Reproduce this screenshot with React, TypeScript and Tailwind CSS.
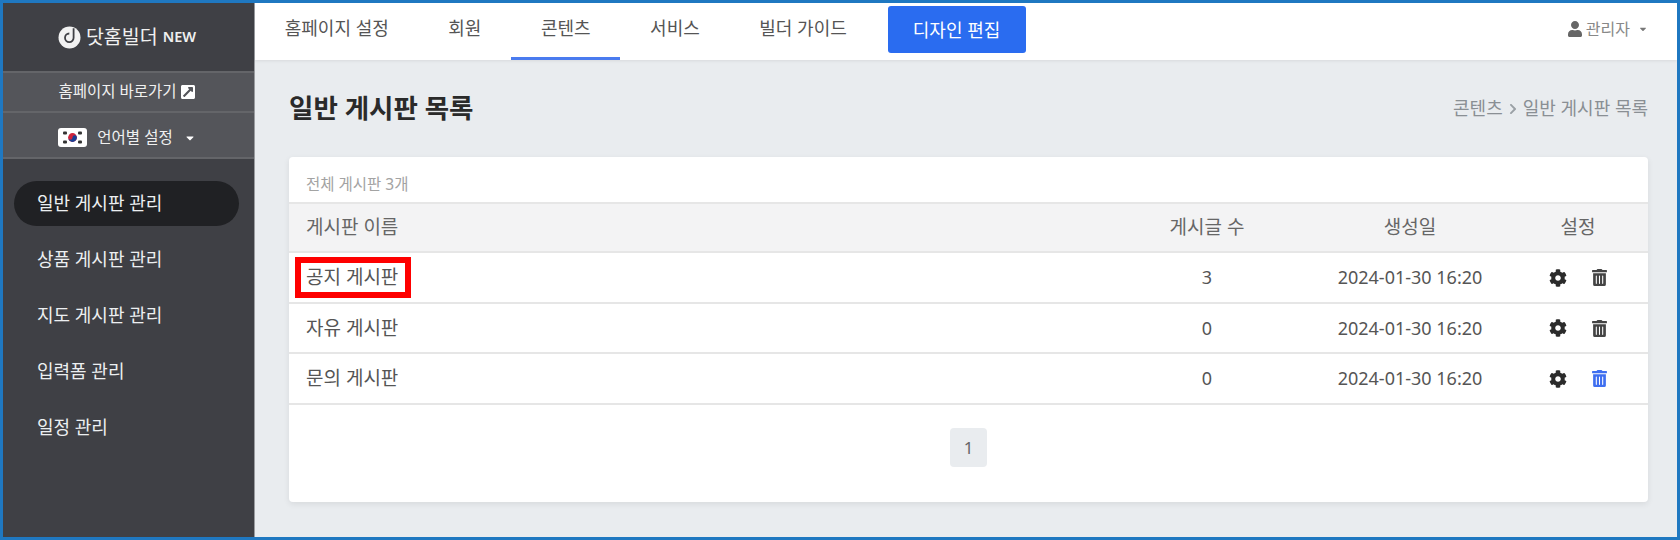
import { FaCog, FaTrashAlt, FaUser, FaExternalLinkSquareAlt, FaCaretDown, FaChevronRight } from 'react-icons/fa'

const tabs = ['홈페이지 설정', '회원', '콘텐츠', '서비스', '빌더 가이드']
const menus = ['일반 게시판 관리', '상품 게시판 관리', '지도 게시판 관리', '입력폼 관리', '일정 관리']
const rows = [
  { name: '공지 게시판', count: 3, h: 'h-[51px]', boxed: true },
  { name: '자유 게시판', count: 0, h: 'h-[50px]' },
  { name: '문의 게시판', count: 0, h: 'h-[51px]', hover: true },
]

function Flag() {
  return (
    <svg width="29" height="19" viewBox="0 0 29 19" className="shrink-0">
      <rect width="29" height="19" rx="3" fill="#fff" />
      <circle cx="14.5" cy="9.5" r="4.4" fill="#d0243c" />
      <path d="M10.1 9.5a4.4 4.4 0 0 0 8.8 0a2.2 2.2 0 0 0-4.4 0a2.2 2.2 0 0 1-4.4 0z" fill="#1a3f94" />
      <g fill="#333">
        <rect x="5" y="3.5" width="4" height="3" rx="1" />
        <rect x="20" y="3.5" width="4" height="3" rx="1" />
        <rect x="5" y="12.5" width="4" height="3" rx="1" />
        <rect x="20" y="12.5" width="4" height="3" rx="1" />
      </g>
    </svg>
  )
}

function Logo() {
  return (
    <svg width="23" height="23" viewBox="0 0 23 23" className="shrink-0">
      <circle cx="11.5" cy="11.5" r="11" fill="#f2f2f2" />
      <path d="M15.6 2.2v9.6a4.3 4.3 0 1 1-4.3-4.3" fill="none" stroke="#3f4045" strokeWidth="1.8" />
    </svg>
  )
}

export default function App() {
  return (
    <div className="h-[540px] w-[1680px] border-[3px] border-[#1f78c1] flex bg-[#e9ecef] overflow-hidden font-['Noto_Sans','Noto_Sans_CJK_KR',sans-serif]">
      {/* sidebar */}
      <aside className="w-[252px] shrink-0 bg-[#3f4045] border-r border-[#9a9ca0]">
        <div className="h-[68px] flex items-center justify-center text-[#f0f0f0] pr-[3px]">
          <Logo />
          <span className="text-[19.5px] ml-[5px]">닷홈빌더</span>
          <span className="text-[14.5px] font-semibold ml-[5px]">NEW</span>
        </div>
        <div className="h-[42px] bg-[#54555a] border-y-2 border-[#646569] flex items-center justify-center gap-[3px] text-[15.5px] text-[#f0f0f0] pr-[3px]">
          홈페이지 바로가기
          <FaExternalLinkSquareAlt className="text-[16px] text-white" />
        </div>
        <div className="h-[48px] -mt-[2px] pt-[5px] bg-[#54555a] border-y-2 border-[#646569] flex items-center justify-center text-[15.5px] text-[#f0f0f0] pr-[3px]">
          <Flag />
          <span className="ml-[10px]">언어별 설정</span>
          <FaCaretDown className="ml-[11px] text-[12px] text-white" />
        </div>
        <nav className="px-[11px] pt-[22px] flex flex-col gap-[11px]">
          {menus.map((m, i) => (
            <div
              key={m}
              className={`h-[45px] w-[225px] rounded-full pl-[23px] flex items-center text-[18px] text-[#eceff1] ${i === 0 ? 'bg-[#202124]' : ''}`}
            >
              {m}
            </div>
          ))}
        </nav>
      </aside>

      <div className="flex-1 min-w-0 flex flex-col">
        {/* top bar */}
        <header className="h-[57px] shrink-0 bg-white shadow-[0_1px_3px_rgba(0,0,0,0.08)] flex items-start">
          <nav className="flex items-start">
            {tabs.map((t, i) => (
              <div
                key={t}
                className={`h-[57px] px-[29.75px] pt-[12px] text-[18px] text-[#555] border-b-[3px] ${i === 2 ? 'border-[#4a7bef]' : 'border-transparent'}`}
              >
                {t}
              </div>
            ))}
          </nav>
          <button className="ml-[11px] mt-[3px] w-[138px] h-[47px] pt-[2px] rounded-[3px] bg-[#2a6cf0] text-white text-[18px]">
            디자인 편집
          </button>
          <div className="ml-auto mr-[29px] mt-[14px] flex items-center text-[16px] text-[#888]">
            <FaUser className="text-[16px] text-[#666]" />
            <span className="ml-[3px]">관리자</span>
            <FaCaretDown className="ml-[8px] text-[10px] text-[#777]" />
          </div>
        </header>

        <main className="flex-1 min-h-0 pl-[34px] pr-[29px]">
          <div className="h-[97px] flex items-center justify-between">
            <h1 className="text-[26.5px] font-semibold text-[#2a2a2a]">일반 게시판 목록</h1>
            <div className="text-[18px] text-[#8a8f94] flex items-center">
              콘텐츠
              <FaChevronRight className="mx-[4px] text-[12px] text-[#9aa0a5]" />
              일반 게시판 목록
            </div>
          </div>

          <section className="h-[345px] bg-white rounded-[4px] shadow-[0_2px_6px_rgba(0,0,0,0.08)]">
            <div className="h-[45px] pl-[17px] pt-[15px] text-[15.5px] text-[#a3a3a3] leading-[24px]">전체 게시판 3개</div>
            <div className="h-[51px] flex items-center bg-[#f3f3f4] border-y-2 border-[#e6e6e6] text-[19px] text-[#666]">
              <div className="flex-1 pl-[17px]">게시판 이름</div>
              <div className="w-[210px] text-center">게시글 수</div>
              <div className="w-[196px] text-center">생성일</div>
              <div className="w-[140px] text-center">설정</div>
            </div>
            {rows.map(r => (
              <div key={r.name} className={`${r.h} flex items-center border-b-2 border-[#e6e6e6] text-[18px] text-[#555]`}>
                <div className="flex-1 pl-[17px]">
                  <span className={`text-[19px] ${r.boxed ? 'inline-block -ml-[11px] pl-[5px] pr-[7px] border-[6px] border-[#fe0000] leading-[29px]' : ''}`}>{r.name}</span>
                </div>
                <div className="w-[210px] text-center">{r.count}</div>
                <div className="w-[196px] text-center">2024-01-30 16:20</div>
                <div className="w-[140px] flex items-center justify-center gap-[24px]">
                  <FaCog className="text-[18px] text-[#2b2b2b]" />
                  <FaTrashAlt className={`text-[17px] ${r.hover ? 'text-[#3f6ff0]' : 'text-[#444]'}`} />
                </div>
              </div>
            ))}
            <div className="flex justify-center pt-[23px]">
              <div className="w-[37px] h-[39px] rounded-[4px] bg-[#e9ecef] flex items-center justify-center text-[17px] text-[#666]">1</div>
            </div>
          </section>
        </main>
      </div>
    </div>
  )
}
